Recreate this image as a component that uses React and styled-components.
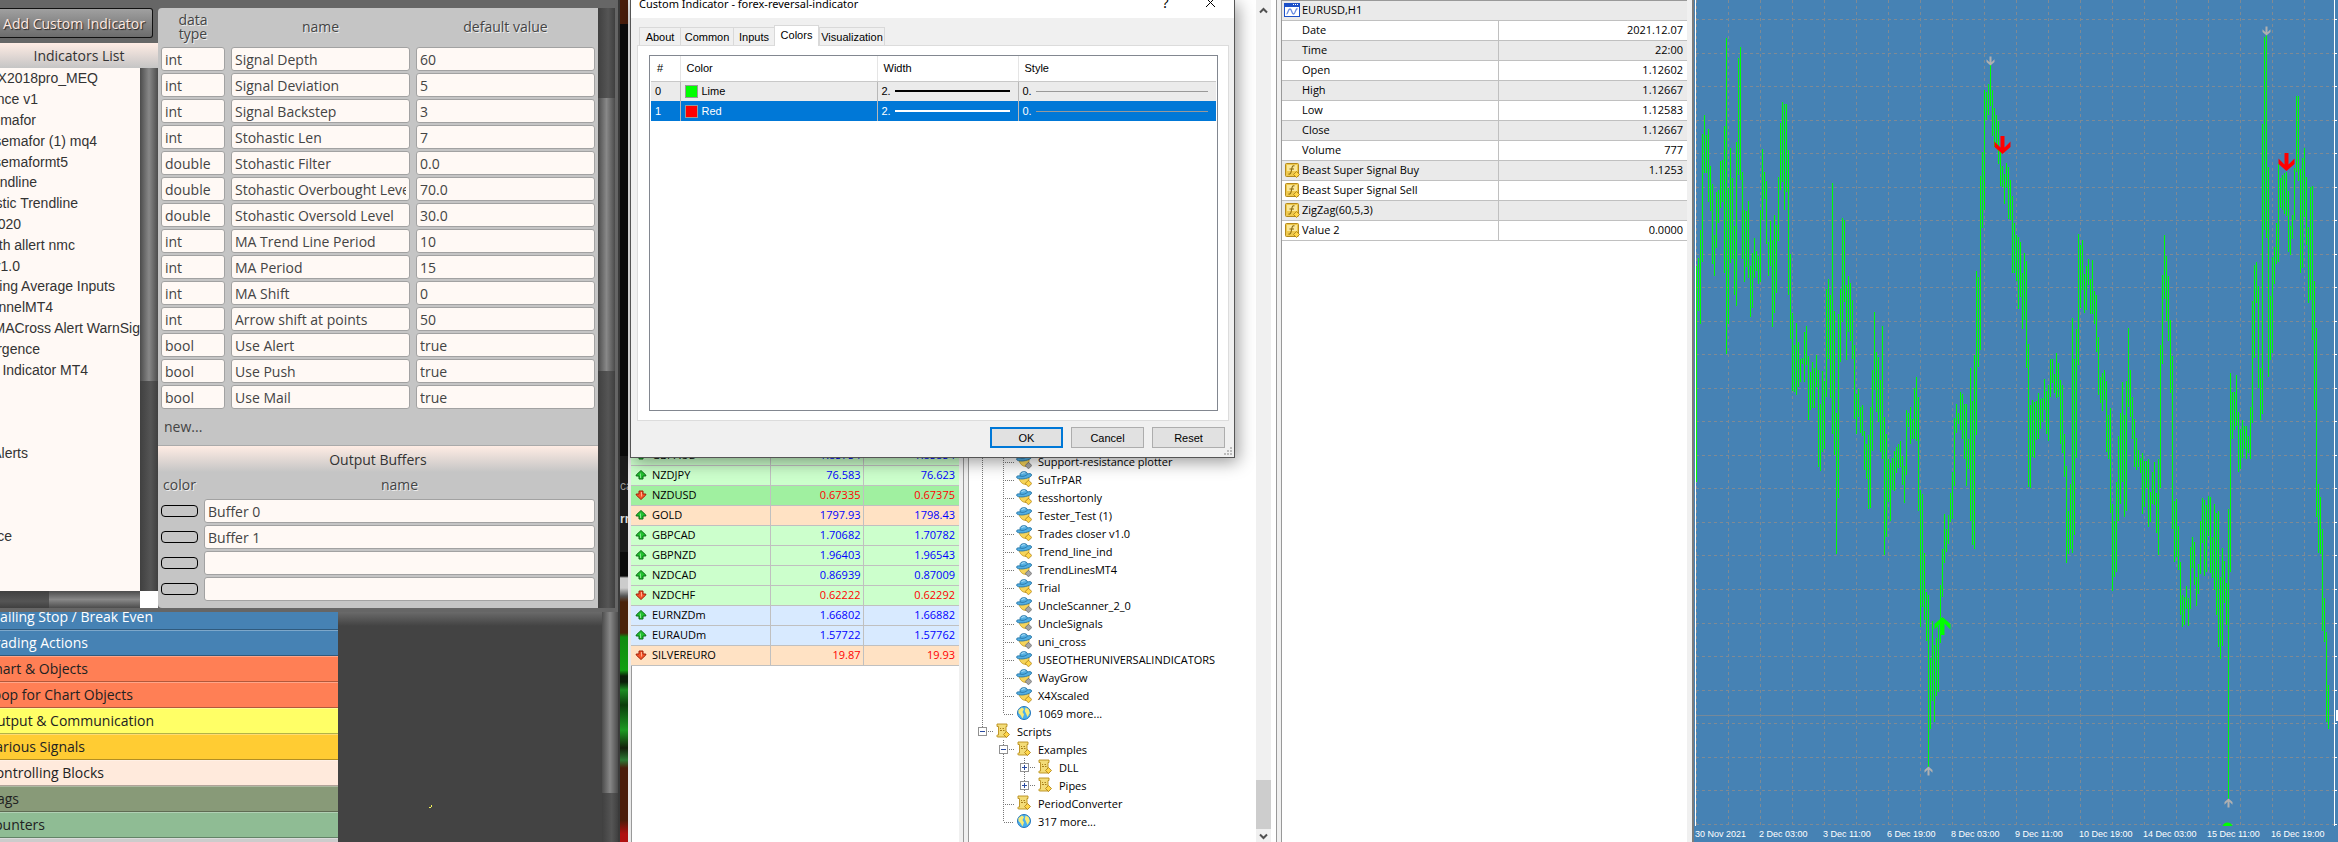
import React from "react";
import styled, { createGlobalStyle, css } from "styled-components";

const GlobalStyle = createGlobalStyle`
  * { box-sizing: border-box; }
  html, body { margin: 0; height: 100%; overflow: hidden; background: #fff; }
  button, input { font: inherit; color: inherit; margin: 0; }
`;

const humanist = `"Open Sans", "Noto Sans", sans-serif`;
const grotesk = `"Liberation Sans", Arial, sans-serif`;

const Desktop = styled.div`
  display: flex;
  height: 100vh;
  overflow: hidden;
  font-family: ${humanist};
`;

/* ---------- strategy builder (left window) ---------- */

const Builder = styled.section`
  flex: 0 0 620px;
  display: flex;
  flex-direction: column;
  background: #666;
  border-right: 2px solid #3a3a3a;
  color: #444;
  font-size: 14px;
`;

const BuilderTop = styled.div`
  display: flex;
  padding-top: 8px;
  height: 612px;
  flex: none;
  padding-bottom: 4px;
`;

const ListColumn = styled.div`
  flex: 0 0 158px;
  display: flex;
  flex-direction: column;
`;

const AddButton = styled.button`
  height: 30px;
  width: 153px;
  margin-bottom: 5px;
  padding: 0 7px 0 0;
  border: 1px solid #111;
  border-left: 0;
  border-radius: 0 3px 3px 0;
  background: linear-gradient(#a0a0a0, #6c6c6c);
  color: #ffe9e0;
  text-align: right;
  white-space: nowrap;
  text-shadow: 1px 1px 1px #222;
`;

const PanelTitle = styled.h2`
  margin: 0;
  height: ${(p) => p.$h}px;
  line-height: ${(p) => p.$h}px;
  font-size: 14px;
  font-weight: 400;
  text-align: center;
  color: #333;
  background: linear-gradient(#ffece4, #c5c5c5);
  ${(p) => p.$ruled && css`border-top: 1px solid #aaa;`}
`;

const ListBody = styled.div`
  flex: 1;
  display: flex;
  min-height: 0;
`;

const IndicatorList = styled.ul`
  flex: 1;
  margin: 0;
  padding: 0 0 3px;
  list-style: none;
  display: grid;
  grid-template-rows: repeat(25, 1fr);
  background: #fff9f5;
  color: #333;
  font-family: ${grotesk};
  font-size: 14px;
  overflow: hidden;
`;

const ScrolledItem = styled.li`
  display: flex;
  align-items: center;
  justify-content: flex-end;
  width: ${(p) => p.$end}px;
  white-space: nowrap;
`;

const DarkTrack = styled.div`
  flex: 0 0 ${(p) => p.$w || 18}px;
  display: flex;
  flex-direction: column;
  background: linear-gradient(90deg, #404040, #555 60%, #404040);
`;

const DarkThumb = styled.div`
  height: ${(p) => p.$h}px;
  margin-top: ${(p) => p.$top || 0}px;
  background: linear-gradient(90deg, #4c4c4c, #888 50%, #4c4c4c);
`;

const BottomTrack = styled.div`
  height: 17px;
  display: flex;
  background: linear-gradient(#404040, #555 60%, #404040);
`;

const BottomThumb = styled.div`
  flex: 1;
  margin-left: 49px;
  background: linear-gradient(#4c4c4c, #888 50%, #4c4c4c);
`;

const TrackCorner = styled.div`
  width: 18px;
  background: #fff;
`;

const ParamPanel = styled.div`
  flex: 1;
  background: #c5c5c5;
  border-radius: 4px 0 0 4px;
  overflow: hidden;
`;

const ParamTable = styled.table`
  width: 100%;
  table-layout: fixed;
  border-collapse: collapse;
  th {
    height: ${(p) => p.$head}px;
    padding: 0;
    font-weight: 400;
    line-height: 14px;
    text-shadow: 1px 1px 0 #eee;
  }
  th span { display: block; width: 30px; margin: 0 auto; }
  td { padding: 1px 3px; height: 26px; }
`;

const Field = styled.input`
  display: block;
  width: 100%;
  height: 24px;
  padding: 0 3px;
  border: 1px solid #a2a2a2;
  border-radius: 3px;
  background: #fff9f5;
  outline: none;
`;

const NewLink = styled.a`
  display: block;
  padding: 0 6px;
  height: 35px;
  line-height: 34px;
  color: inherit;
  text-decoration: none;
`;

const Swatch = styled.button`
  display: block;
  width: 37px;
  height: 12px;
  padding: 0;
  border: 1px solid #000;
  border-radius: 4px;
  background: #c5c5c5;
`;

const FrameGap = styled.div`
  width: 3px;
`;

const BlocksArea = styled.div`
  flex: 1;
  display: flex;
  min-height: 0;
  background: #434343;
  overflow: hidden;
`;

const BlockList = styled.div`
  flex: 0 0 338px;
  display: flex;
  flex-direction: column;
  justify-content: flex-start;
  margin-top: -8px;
`;

const Block = styled.div`
  flex: none;
  height: 26px;
  background: ${(p) => p.$bg};
  color: ${(p) => p.$fg || "#222"};
  border-top: 1px solid rgba(255, 255, 255, 0.3);
  border-bottom: 1px solid rgba(0, 0, 0, 0.3);
  line-height: 24px;
`;

const BlockLabel = styled.div`
  display: flex;
  justify-content: flex-end;
  width: ${(p) => p.$end}px;
  white-space: nowrap;
`;

const Canvas = styled.div`
  flex: 1;
  display: flex;
  align-items: flex-end;
  padding: 0 0 34px 91px;
  background: linear-gradient(#6a6a6a, #434343 14px);
`;

/* ---------- slice of the desktop between the windows ---------- */

const Sliver = styled.div`
  flex: 0 0 8px;
  overflow: hidden;
  padding-top: 476px;
  color: #999;
  font-family: ${grotesk};
  font-size: 12px;
  background: linear-gradient(
    #4a1d0a 0 24px, #0b0b0b 24px 456px, #1c1c1c 456px 552px, #0b0b0b 552px 576px,
    #ccc 578px 588px, #555 596px, #4a2208 602px 633px, #0f8a0f 637px, #12a012 670px,
    #0a1e08 676px 682px, #1c8c22 690px, #0b3c0b 705px, #1c9a22 730px, #12200a 748px,
    #2c7a34 760px, #4a1d0a 768px 820px, #b01010 834px
  );
`;

const SliverText = styled.div`
  height: 33px;
  line-height: 20px;
  color: ${(p) => p.$c};
  font-weight: ${(p) => p.$w};
`;

/* ---------- trading terminal ---------- */

const Terminal = styled.section`
  position: relative;
  flex: 1;
  min-width: 0;
  display: flex;
  background: #f0f0f0;
  color: #000;
  font-size: 11px;
`;

const MarketWatch = styled.div`
  flex: 0 0 336px;
  padding: 445px 4px 0 0;
  border-left: 3px solid #e8e8e8;
  border-right: 1px solid #999;
  background: linear-gradient(90deg, #999 1px, #fff 1px 328px, #f0f0f0 328px);
`;

const DataTable = styled.table`
  width: 100%;
  table-layout: fixed;
  border-collapse: collapse;
  td, th {
    height: 20px;
    padding: 0 4px 0 0;
    border-bottom: 1px solid #c0c0c0;
    line-height: 18px;
    font-weight: 400;
    text-align: right;
    white-space: nowrap;
  }
  td + td, th + td { border-left: 1px solid #c0c0c0; }
  th { text-align: left; }
`;

const QuoteRow = styled.tr`
  background: ${(p) => p.$bg};
  td { color: ${(p) => (p.$up ? "#00f" : "#f00")}; padding-right: 2px; }
  td:last-child { padding-right: 4px; }
`;

const IconLabel = styled.span`
  display: flex;
  align-items: center;
  gap: ${(p) => p.$gap}px;
  padding-left: ${(p) => p.$pad}px;
  svg { flex: none; }
`;

const Navigator = styled.div`
  flex: 0 0 309px;
  display: flex;
  margin-left: 4px;
  border-left: 1px solid #999;
  border-right: 1px solid #999;
  background: #fff;
`;

const Tree = styled.ul`
  flex: 1;
  margin: 0;
  padding: 452px 0 0;
  list-style: none;
`;

const TreeRow = styled.li`
  display: flex;
  align-items: center;
  height: 18px;
  white-space: nowrap;
  svg { flex: none; }
`;

const TreeText = styled.span`
  padding-left: 6px;
`;

const ScrollBar = styled.div`
  flex: 0 0 15px;
  display: flex;
  flex-direction: column;
  align-items: center;
  justify-content: space-between;
  margin-right: 5px;
  padding: 7px 0 2px;
  background: #f0f0f0;
`;

const ScrollEnd = styled.div`
  width: 100%;
  display: flex;
  flex-direction: column;
  align-items: center;
  gap: 4px;
`;

const LightThumb = styled.div`
  width: 100%;
  height: 49px;
  background: #cdcdcd;
`;

const DataWindow = styled.div`
  flex: 0 0 406px;
  margin: 0 5px 0 4px;
  border-left: 1px solid #999;
  border-top: 1px solid #999;
  background: #fff;
`;

const ValueRow = styled.tr`
  background: ${(p) => (p.$shade ? "#eaeaea" : "#fff")};
  &:first-child th { height: 19px; }
`;

const ChartPane = styled.div`
  flex: 1;
  min-width: 0;
  display: flex;
  flex-direction: column;
  border-left: 2px solid #7c7c7c;
  background: #4682b4;
  overflow: hidden;
`;

const ChartSvg = styled.svg`
  display: block;
  flex: 1;
  width: 100%;
  min-height: 0;
`;

const TimeAxis = styled.div`
  flex: 0 0 13px;
  display: flex;
  padding-left: 1px;
  color: #fff;
  font-family: ${grotesk};
  font-size: 9px;
  line-height: 16px;
  span { flex: 0 0 64px; white-space: nowrap; }
`;

/* ---------- indicator properties dialog ---------- */

const Dialog = styled.div`
  position: absolute;
  left: 2px;
  top: 0;
  width: 605px;
  height: 458px;
  display: flex;
  flex-direction: column;
  border: 1px solid #555;
  border-top: 0;
  background: #f0f0f0;
  box-shadow: 3px 4px 16px rgba(0, 0, 0, 0.4);
  font-family: ${grotesk};
  font-size: 11px;
`;

const TitleBar = styled.header`
  flex: 0 0 18px;
  display: flex;
  align-items: flex-start;
  background: #fff;
  padding: 0 1px 0 8px;
  font-family: "Noto Sans", ${humanist};
  font-size: 11px;
  overflow: hidden;
`;

const TitleText = styled.span`
  flex: 1;
  line-height: 20px;
  height: 20px;
  margin-top: -6px;
`;

const TitleButton = styled.button`
  width: 45px;
  height: 14px;
  margin-top: -4px;
  padding: 0;
  border: 0;
  background: none;
  font-size: 14px;
  line-height: 14px;
`;

const Tabs = styled.div`
  display: flex;
  align-items: flex-end;
  padding: 7px 0 0 8px;
  height: 27px;
`;

const Tab = styled.button`
  width: ${(p) => p.$w}px;
  height: ${(p) => (p.$on ? 21 : 18)}px;
  margin: 0 0 ${(p) => (p.$on ? -1 : 0)}px 0;
  padding: 0 0 ${(p) => (p.$on ? 2 : 0)}px;
  border: 1px solid #d9d9d9;
  border-bottom: 0;
  border-right-width: ${(p) => (p.$last || p.$on ? 1 : 0)}px;
  background: ${(p) => (p.$on ? "#fff" : "#f0f0f0")};
  z-index: ${(p) => (p.$on ? 1 : 0)};
  text-align: center;
`;

const TabPage = styled.div`
  flex: 1;
  margin: 0 5px 0 6px;
  padding: 9px 10px 9px 11px;
  border: 1px solid #dcdcdc;
  background: #fff;
  display: flex;
`;

const ColorBox = styled.div`
  flex: 1;
  border: 1px solid #828790;
  padding: 0 1px;
`;

const ColorTable = styled.table`
  width: 100%;
  table-layout: fixed;
  border-collapse: collapse;
  th {
    height: 25px;
    padding: 0 0 0 6px;
    text-align: left;
    font-weight: 400;
    border-right: 1px solid #e5e5e5;
    border-bottom: 1px solid #c8c8c8;
  }
  td { height: 20px; padding: 0 5px 0 4px; border-right: 1px solid #b8b8b8; }
  td:last-child, th:last-child { border-right: 0; }
`;

const ColorRow = styled.tr`
  background: ${(p) => (p.$on ? "#0078d7" : "#ebebeb")};
  color: ${(p) => (p.$on ? "#fff" : "#000")};
`;

const Inline = styled.span`
  display: flex;
  align-items: center;
  gap: 4px;
`;

const ColorChip = styled.span`
  width: 13px;
  height: 13px;
  border: 1px solid #999;
  background: ${(p) => p.$c};
`;

const Stroke = styled.span`
  flex: 1;
  height: ${(p) => p.$h}px;
  margin-right: 3px;
  background: ${(p) => p.$c};
`;

const Footer = styled.footer`
  display: flex;
  justify-content: flex-end;
  align-items: flex-start;
  gap: 8px;
  height: 36px;
  padding: 6px 9px 0 0;
`;

const DialogButton = styled.button`
  width: 73px;
  height: 21px;
  padding: 0;
  border: ${(p) => (p.$main ? "2px solid #0078d7" : "1px solid #adadad")};
  background: #e1e1e1;
`;

const Grip = styled.svg`
  position: absolute;
  right: 2px;
  bottom: 2px;
`;

/* ---------- icons ---------- */

const ArrowIcon = ({ up }) => (
  <svg width="12" height="12" viewBox="0 0 12 12">
    <g transform={up ? undefined : "rotate(180 6 6)"}>
      <path d="M6 1.5 L10.8 6 V7 H8 V10 H4 V7 H1.200 V6 Z" fill={up ? "#22c030" : "#f5562c"} stroke={up ? "#0a6a14" : "#a02008"} />
      <path d="M5.500 4.500 V9" stroke={up ? "#86e58c" : "#ffb090"} />
    </g>
  </svg>
);

const AdvisorIcon = ({ on }) => (
  <svg width="16" height="16" viewBox="0 0 16 16">
    <path d="M3 7 C3.500 10 6 13.500 10 13.500 C12 12 13.500 9 13 6 Z" fill="#f6d45a" stroke="#c0961f" strokeWidth="0.8" />
    <path d="M4 3.500 C4 0 11 -0.500 11.500 3 C13 2.500 15.500 2.200 15.600 4 C15.700 7 4 9.500 1 7 C-0.500 5.500 1.500 4.500 4 5 Z" fill="#52aee2" stroke="#226f9f" strokeWidth="0.8" />
    <path d="M4 5 C6.500 6 10 5 11.500 3.200" stroke="#226f9f" strokeWidth="0.8" fill="none" />
    <path d="M5.500 3 C6 1.800 8 1.500 9.200 1.900" stroke="#b8e4f8" fill="none" />
    <path d="M12.500 9.200 L15.800 12.500 L12.500 15.800 L9.200 12.500 Z" fill={on ? "#ffd64a" : "#a5a5a5"} stroke={on ? "#a87a10" : "#666"} strokeWidth="0.800" />
  </svg>
);

const ScriptIcon = () => (
  <svg width="16" height="16" viewBox="0 0 16 16">
    <path d="M2 1 H12 V3.500 H11 V12.500 H12 V14 H3 C1 14 1.500 11.500 3.500 12 V3.500 H2 Z" fill="#f3dc78" stroke="#b98d1a" strokeWidth="0.900" />
    <path d="M5 5.500 H6 M7.500 5.500 H9 M5 7.500 H7 M8 7.500 H9.500" stroke="#a8801c" />
    <path d="M11.500 8.500 L14.500 11.500 L11.500 14.500 L8.500 11.500 Z" fill="#ffd64a" stroke="#a87a10" strokeWidth="0.800" />
  </svg>
);

const GlobeIcon = () => (
  <svg width="16" height="16" viewBox="0 0 16 16">
    <circle cx="8" cy="8" r="6.500" fill="#49b0ee" stroke="#2276bd" />
    <path d="M2.500 5 L6 2.500 L8 4 L6.500 7 L8 9.500 L6.500 13.500 L4.500 10 L2.500 8 Z M9.500 2.500 L12.500 4 L13.800 8 L11.500 12 L10 8.500 L8.800 6 Z" fill="#f7ea78" />
  </svg>
);

const FormulaIcon = () => (
  <svg width="15" height="15" viewBox="0 0 15 15">
    <rect x="0.500" y="0.500" width="13" height="13" rx="1" fill="#efc94e" stroke="#b48a1c" />
    <rect x="2" y="2" width="10" height="6" fill="#fae79a" />
    <path d="M9.500 3 C7.500 2 7 4 6.500 7 C6 10 5.500 11.500 3.500 11 M4.500 6 H9" fill="none" stroke="#8a6a10" strokeWidth="1.100" />
    <path d="M11.500 8.500 L14.500 11.500 L11.500 14.500 L8.500 11.500 Z" fill="#ffd64a" stroke="#a87a10" strokeWidth="0.800" />
  </svg>
);

const SymbolIcon = () => (
  <svg width="16" height="14" viewBox="0 0 16 14">
    <rect x="0.500" y="0.500" width="15" height="13" fill="#fff" stroke="#1c50c8" />
    <rect x="0" y="0" width="16" height="4" fill="#1c50c8" />
    <path d="M9 1.500 H10 M11 1.500 H12 M13 1.500 H14" stroke="#fff" />
    <path d="M2.500 11 C4 11 4 6 6 6 C8 6 7.500 11 9.500 11 C11.500 11 11 6 13.500 5.500" fill="none" stroke="#6a8ce0" strokeWidth="1.300" />
  </svg>
);

const Chevron = ({ up }) => (
  <svg width="9" height="7" viewBox="0 0 9 7">
    <path d={up ? "M1 5.500 L4.500 2 L8 5.500" : "M1 1.500 L4.500 5 L8 1.500"} fill="none" stroke="#505050" strokeWidth="2" />
  </svg>
);

const dots = { stroke: "#777", strokeDasharray: "1 1", shapeRendering: "crispEdges", fill: "none" };

/* Dotted guide lines in front of a tree entry; the shape depends on its depth. */
const Guide = ({ kind }) => {
  const plus = (x, open) => (
    <g shapeRendering="crispEdges">
      <rect x={x + 0.5} y="5.500" width="8" height="8" fill="#fff" stroke="#919191" />
      <path d={`M${x + 2} 9.500 H${x + 7}${open ? "" : ` M${x + 4.5} 7 V12`}`} stroke="#2a4ba0" />
    </g>
  );
  const shapes = {
    expert: [47, <path key="a" d="M13.500 0 V18 M34.500 0 V18 M36 10.500 H45" {...dots} />],
    expertEnd: [47, <path key="a" d="M13.500 0 V18 M34.500 0 V10 M34.500 10.500 H45" {...dots} />],
    root: [26, <g key="a"><path d="M13.500 0 V5 M19 9.500 H25" {...dots} />{plus(9, true)}</g>],
    branch: [47, <g key="a"><path d="M34.500 0 V18 M40 9.500 H46" {...dots} />{plus(30, true)}</g>],
    leaf: [68, <g key="a"><path d="M34.500 0 V18 M55.500 0 V18 M61 9.500 H67" {...dots} />{plus(51, false)}</g>],
    item: [47, <path key="a" d="M34.500 0 V18 M36 10.500 H45" {...dots} />],
    itemEnd: [47, <path key="a" d="M34.500 0 V10 M34.500 10.500 H45" {...dots} />],
  };
  const [w, shape] = shapes[kind];
  return <svg width={w} height="18">{shape}</svg>;
};

/* ---------- data ---------- */

const indicators = [
  ["X2018pro_MEQ", 98], ["nce v1", 38], ["emafor", 36], ["semafor (1) mq4", 97], ["semaformt5", 68],
  ["endline", 37], ["astic Trendline", 78], ["020", 21], ["ith allert nmc", 75], ["v1.0", 20],
  ["ving Average Inputs", 115], ["nnelMT4", 53], ["MACross Alert WarnSig", 140], ["ergence", 40],
  ["Indicator MT4", 88], null, null, null, ["Alerts", 28], null, null, null, ["ce", 12],
];

const params = [
  ["int", "Signal Depth", "60"], ["int", "Signal Deviation", "5"], ["int", "Signal Backstep", "3"],
  ["int", "Stohastic Len", "7"], ["double", "Stohastic Filter", "0.0"],
  ["double", "Stohastic Overbought Level", "70.0"], ["double", "Stohastic Oversold Level", "30.0"],
  ["int", "MA Trend Line Period", "10"], ["int", "MA Period", "15"], ["int", "MA Shift", "0"],
  ["int", "Arrow shift at points", "50"], ["bool", "Use Alert", "true"], ["bool", "Use Push", "true"],
  ["bool", "Use Mail", "true"],
];

const blocks = [
  ["ailing Stop / Break Even", 153, "#4682b4", "#fff"], ["rading Actions", 88, "#4682b4", "#fff"],
  ["hart & Objects", 88, "#ff7f55"], ["oop for Chart Objects", 133, "#ff7f55"],
  ["Output & Communication", 154, "#ffff66"], ["arious Signals", 85, "#ffcc33"],
  ["ontrolling Blocks", 104, "#ffeadc"], ["lags", 19, "#889a78"], ["ounters", 45, "#8fbc94"], ["", 0, "#ccc"],
];

const quotes = [
  ["GBPAUD", "1.85754", "1.85854", 1, "#cfc"], ["NZDJPY", "76.583", "76.623", 1, "#cfc"],
  ["NZDUSD", "0.67335", "0.67375", 0, "#a0f0a0"], ["GOLD", "1797.93", "1798.43", 1, "#ffe2c4"],
  ["GBPCAD", "1.70682", "1.70782", 1, "#cfc"], ["GBPNZD", "1.96403", "1.96543", 1, "#cfc"],
  ["NZDCAD", "0.86939", "0.87009", 1, "#cfc"], ["NZDCHF", "0.62222", "0.62292", 0, "#cfc"],
  ["EURNZDm", "1.66802", "1.66882", 1, "#d8eaff"], ["EURAUDm", "1.57722", "1.57762", 1, "#d8eaff"],
  ["SILVEREURO", "19.87", "19.93", 0, "#ffe2c4"],
];

const experts = [
  ["Support-resistance plotter", 0], ["SuTrPAR", 1], ["tesshortonly", 1], ["Tester_Test (1)", 1],
  ["Trades closer v1.0", 1], ["Trend_line_ind", 1], ["TrendLinesMT4", 0], ["Trial", 1],
  ["UncleScanner_2_0", 0], ["UncleSignals", 0], ["uni_cross", 0], ["USEOTHERUNIVERSALINDICATORS", 1],
  ["WayGrow", 0], ["X4Xscaled", 1],
];

const values = [
  ["Date", "2021.12.07"], ["Time", "22:00"], ["Open", "1.12602"], ["High", "1.12667"], ["Low", "1.12583"],
  ["Close", "1.12667"], ["Volume", "777"], ["Beast Super Signal Buy", "1.1253", 1],
  ["Beast Super Signal Sell", "", 1], ["ZigZag(60,5,3)", "", 1], ["Value 2", "0.0000", 1],
];

const times = [
  "30 Nov 2021", "2 Dec 03:00", "3 Dec 11:00", "6 Dec 19:00", "8 Dec 03:00",
  "9 Dec 11:00", "10 Dec 19:00", "14 Dec 03:00", "15 Dec 11:00", "16 Dec 19:00",
];

/* High and low of each bar, measured down from the top of the price range. */
const bars = `495-898 480-580 428-603 250-488 214-323 251-322 240-376 309-392 343-492 438-514 358-462 354-416
300-387 298-376 235-508 71-659 351-603 276-490 331-482 421-550 264-570 108-326 88-336 320-482 391-525 393-497
374-517 495-590 471-574 443-518 467-505 477-529 391-525 277-410 320-370 337-454 451-514 411-495 447-609 400-583
419-546 330-448 229-354 190-339 194-391 194-358 279-549 473-631 583-728 642-730 601-736 637-721 668-711 667-678
618-711 607-680 663-782 693-764 674-760 685-760 661-721 689-870 752-877 691-842 710-836 538-739 520-669 549-741
341-808 579-847 769-1032 585-927 538-674 406-600 409-562 531-670 514-618 527-635 559-669 642-780 734-808 724-777
758-806 754-811 803-875 827-892 810-947 758-946 689-839 581-726 656-767 665-786 708-842 607-855 777-1033 808-1000
855-934 862-970 853-912 840-914 832-881 827-872 821-870 850-903 868-937 764-885 769-795 758-827 780-818 723-818
702-822 739-952 912-1167 920-1130 1030-1155 1102-1193 1108-1432 1225-1358 1156-1305 1201-1345 1188-1297 1165-1289
1089-1198 1022-1112 957-1048 985-1028 959-1013 918-972 879-966 778-905 752-806 769-790 730-801 734-818 752-854
752-905 818-873 685-970 747-1015 662-1022 505-810 516-683 328-652 283-424 168-391 171-224 157-214 118-197 168-253
201-273 214-270 225-306 280-346 309-348 324-380 304-350 311-408 335-410 365-508 415-508 437-524 441-575 451-554
508-613 471-596 486-685 641-907 755-909 745-851 749-853 746-819 732-818 743-799 742-785 706-764 728-808 717-821
669-739 669-713 696-732 657-741 676-739 708-827 717-844 808-888 868-1048 951-1032 901-1022 592-1029 669-996
613-853 436-680 457-574 447-540 510-583 495-577 482-530 520-584 484-585 542-603 549-656 628-736 702-750 695-766
689-745 710-842 773-855 760-955 938-1101 970-1075 898-1065 812-970 769-938 711-898 773-963 710-952 611-758 689-777
739-818 780-870 816-875 838-870 852-880 844-957 858-944 858-909 855-981 916-972 879-938 860-941 918-993 855-1034
642-909 512-678 438-557 477-597 514-635 596-732 663-985 933-1047 929-1038 980-1061 1047-1145 1108-1168 1112-1164
1091-1135 1114-1166 1019-1134 1000-1058 1009-1090 1075-1129 1050-1106 970-1069 927-1011 931-1073 940-1065 924-998
926-1067 1000-1077 938-1099 955-1145 951-1205 1075-1227 1021-1203 1045-1123 1086-1164 948-1490 695-1065 730-818
730-801 698-793 767-879 799-873 782-853 793-836 793-855 811-844 758-855 561-788 493-667 488-564 533-723 685-783
231-771 69-428 66-443 311-702 551-670 479-658 460-529 415-491 305-488 331-387 326-391 322-399 320-402 356-469
421-474 400-445 313-410 179-320 179-337 315-508 294-499 276-404 330-456 423-564 348-558 346-633 523-764 611-962
901-1030 926-1032 985-1175 1114-1196 1176-1345 1276-1358`
  .split(/\s+/)
  .map((b) => b.split("-").map((v) => Math.round(v / 1.8622)));

const barX = (i) => 2.5 + 2 * i;
const barPath = bars.map(([hi, lo], i) => `M${barX(i)} ${hi}V${lo}`).join("");
const rowLevels = Array.from({ length: 25 }, (_, i) => Math.round(19 + i * 33.53) + 0.5);
const colLevels = Array.from({ length: 20 }, (_, i) => barX(16 * i));
const rowPath = rowLevels.map((y) => `M2 ${y}H640`).join("");
const tickPath = rowLevels.map((y) => `M640 ${y}H643`).join("");
const colPath = colLevels.map((x) => `M${x} 0V827`).join("");

const Marker = ({ x, y, up, big, color }) => {
  const s = big ? 2 : 1;
  return (
    <g transform={`translate(${x} ${y}) scale(${s} ${up ? s : -s})`}>
      <path d="M0 -4.500 L4 -1 V1.700 L1 -1.300 V4.500 H-1 V-1.300 L-4 1.700 V-1 Z" fill={color} />
    </g>
  );
};

const PriceChart = () => (
  <ChartPane>
    <ChartSvg role="img" aria-label="EURUSD hourly bars">
      <g shapeRendering="crispEdges" fill="none">
        <path d={rowPath + colPath} stroke="#7f8a94" strokeDasharray="3 3" />
        <path d="M2 715.500H640" stroke="#75899a" />
        <path d={barPath} stroke="#0f0" />
        <path d="M1.500 0V827.500H644M640.500 0V828" stroke="#fff" />
        <path d={tickPath} stroke="#fff" />
      </g>
      <rect x="642" y="710" width="3" height="11" fill="#fff" />
      <Marker x={barX(147)} y={61} color="#b0b0b0" />
      <Marker x={barX(116)} y={771} up color="#b0b0b0" />
      <Marker x={barX(285)} y={31} color="#b0b0b0" />
      <Marker x={barX(266)} y={803} up color="#b0b0b0" />
      <Marker x={barX(153)} y={145} big color="#f00" />
      <Marker x={barX(295)} y={162} big color="#f00" />
      <Marker x={barX(123)} y={626} up big color="#0f0" />
      <path d="M528 827 C530 821 537 821 539 827 Z" fill="#0f0" />
    </ChartSvg>
    <TimeAxis>{times.map((t) => <span key={t}>{t}</span>)}</TimeAxis>
  </ChartPane>
);

const StrategyBuilder = () => (
  <Builder>
    <BuilderTop>
      <ListColumn>
        <AddButton>Add Custom Indicator</AddButton>
        <PanelTitle $h={25}>Indicators List</PanelTitle>
        <ListBody>
          <IndicatorList>
            {indicators.map((it, i) => <ScrolledItem key={i} $end={it ? it[1] : 0}>{it && it[0]}</ScrolledItem>)}
          </IndicatorList>
          <DarkTrack><DarkThumb $h={313} /></DarkTrack>
        </ListBody>
        <BottomTrack><BottomThumb /><TrackCorner /></BottomTrack>
      </ListColumn>
      <ParamPanel>
        <ParamTable $head={38}>
          <colgroup><col width="70" /><col width="185" /><col width="185" /></colgroup>
          <thead>
            <tr><th><span>data type</span></th><th>name</th><th>default value</th></tr>
          </thead>
          <tbody>
            {params.map((row) => (
              <tr key={row[1]}>
                {row.map((v, i) => <td key={i}><Field defaultValue={v} aria-label={`${row[1]} ${["type", "name", "default"][i]}`} /></td>)}
              </tr>
            ))}
          </tbody>
        </ParamTable>
        <NewLink href="#new">new...</NewLink>
        <PanelTitle $h={27} $ruled>Output Buffers</PanelTitle>
        <ParamTable $head={26}>
          <colgroup><col width="43" /><col /></colgroup>
          <thead><tr><th>color</th><th>name</th></tr></thead>
          <tbody>
            {["Buffer 0", "Buffer 1", "", ""].map((b, i) => (
              <tr key={i}>
                <td><Swatch aria-label={`Color of buffer ${i}`} /></td>
                <td><Field defaultValue={b} aria-label={`Name of buffer ${i}`} /></td>
              </tr>
            ))}
          </tbody>
        </ParamTable>
      </ParamPanel>
      <DarkTrack $w={17}><DarkThumb $h={273} $top={90} /></DarkTrack>
      <FrameGap />
    </BuilderTop>
    <BlocksArea>
      <BlockList>
        {blocks.map(([t, end, bg, fg], i) => (
          <Block key={i} $bg={bg} $fg={fg}><BlockLabel $end={end}>{t}</BlockLabel></Block>
        ))}
      </BlockList>
      <Canvas>
        <svg width="3" height="3"><path d="M0 2.500 H2 M2.500 0 V2" stroke="#f5f55a" /></svg>
      </Canvas>
      <DarkTrack $w={16}><DarkThumb $h={181} /></DarkTrack>
    </BlocksArea>
  </Builder>
);

const ColorsDialog = () => (
  <Dialog role="dialog" aria-label="Custom Indicator">
    <TitleBar>
      <TitleText>Custom Indicator - forex-reversal-indicator</TitleText>
      <TitleButton>?</TitleButton>
      <TitleButton aria-label="Close">
        <svg width="11" height="11" viewBox="0 0 11 11"><path d="M1 1 L10 10 M10 1 L1 10" stroke="#000" /></svg>
      </TitleButton>
    </TitleBar>
    <Tabs role="tablist">
      <Tab $w={41}>About</Tab>
      <Tab $w={53}>Common</Tab>
      <Tab $w={41}>Inputs</Tab>
      <Tab $w={45} $on>Colors</Tab>
      <Tab $w={66} $last>Visualization</Tab>
    </Tabs>
    <TabPage>
      <ColorBox>
        <ColorTable>
          <colgroup><col width="29" /><col width="197" /><col width="141" /><col /></colgroup>
          <thead><tr><th>#</th><th>Color</th><th>Width</th><th>Style</th></tr></thead>
          <tbody>
            {[["0", "Lime", "#0f0"], ["1", "Red", "#f00"]].map(([n, name, c], i) => (
              <ColorRow key={n} $on={i === 1}>
                <td>{n}</td>
                <td><Inline><ColorChip $c={c} />{name}</Inline></td>
                <td><Inline>2.<Stroke $h={2} $c={i ? "#fff" : "#000"} /></Inline></td>
                <td><Inline>0.<Stroke $h={1} $c="#999" /></Inline></td>
              </ColorRow>
            ))}
          </tbody>
        </ColorTable>
      </ColorBox>
    </TabPage>
    <Footer>
      <DialogButton $main>OK</DialogButton>
      <DialogButton>Cancel</DialogButton>
      <DialogButton>Reset</DialogButton>
    </Footer>
    <Grip width="8" height="8" viewBox="0 0 8 8">
      <path d="M6 0h2v2h-2z M3 3h2v2h-2z M6 3h2v2h-2z M0 6h2v2h-2z M3 6h2v2h-2z M6 6h2v2h-2z" fill="#bbb" />
    </Grip>
  </Dialog>
);

const TreeEntry = ({ kind, icon, children }) => (
  <TreeRow><Guide kind={kind} />{icon}<TreeText>{children}</TreeText></TreeRow>
);

export default function App() {
  return (
    <Desktop>
      <GlobalStyle />
      <StrategyBuilder />
      <Sliver>
        <SliverText $c="#999" $w={400}>ca</SliverText>
        <SliverText $c="#ddd" $w={700}>rn</SliverText>
      </Sliver>
      <Terminal>
        <MarketWatch>
          <DataTable>
            <colgroup><col width="139" /><col width="93" /><col /></colgroup>
            <tbody>
              {quotes.map(([s, bid, ask, up, bg]) => (
                <QuoteRow key={s} $up={up} $bg={bg}>
                  <th scope="row"><IconLabel $gap={5} $pad={4}><ArrowIcon up={!!up} />{s}</IconLabel></th>
                  <td>{bid}</td>
                  <td>{ask}</td>
                </QuoteRow>
              ))}
            </tbody>
          </DataTable>
        </MarketWatch>
        <Navigator>
          <Tree>
            {experts.map(([name, on]) => (
              <TreeEntry key={name} kind="expert" icon={<AdvisorIcon on={!!on} />}>{name}</TreeEntry>
            ))}
            <TreeEntry kind="expertEnd" icon={<GlobeIcon />}>1069 more...</TreeEntry>
            <TreeEntry kind="root" icon={<ScriptIcon />}>Scripts</TreeEntry>
            <TreeEntry kind="branch" icon={<ScriptIcon />}>Examples</TreeEntry>
            <TreeEntry kind="leaf" icon={<ScriptIcon />}>DLL</TreeEntry>
            <TreeEntry kind="leaf" icon={<ScriptIcon />}>Pipes</TreeEntry>
            <TreeEntry kind="item" icon={<ScriptIcon />}>PeriodConverter</TreeEntry>
            <TreeEntry kind="itemEnd" icon={<GlobeIcon />}>317 more...</TreeEntry>
          </Tree>
          <ScrollBar>
            <Chevron up />
            <ScrollEnd><LightThumb /><Chevron /></ScrollEnd>
          </ScrollBar>
        </Navigator>
        <DataWindow>
          <DataTable>
            <colgroup><col width="216" /><col /></colgroup>
            <tbody>
              <ValueRow $shade>
                <th colSpan="2"><IconLabel $gap={2} $pad={2}><SymbolIcon />EURUSD,H1</IconLabel></th>
              </ValueRow>
              {values.map(([k, v, f], i) => (
                <ValueRow key={k} $shade={i % 2 === 1}>
                  <th scope="row">
                    <IconLabel $gap={2} $pad={f ? 3 : 20}>{f && <FormulaIcon />}{k}</IconLabel>
                  </th>
                  <td>{v}</td>
                </ValueRow>
              ))}
            </tbody>
          </DataTable>
        </DataWindow>
        <PriceChart />
        <ColorsDialog />
      </Terminal>
    </Desktop>
  );
}
